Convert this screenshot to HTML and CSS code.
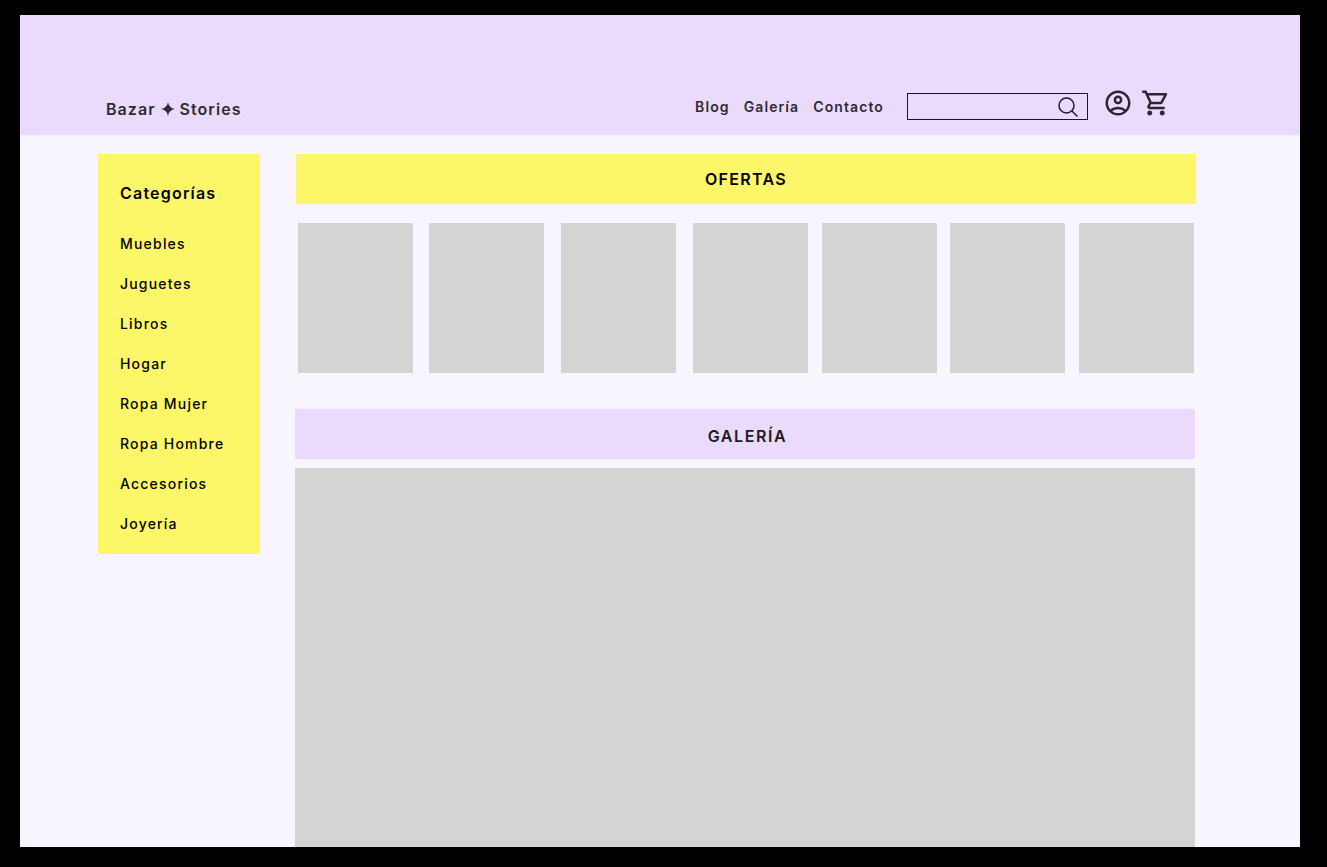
FILE: index.html
```html
<!DOCTYPE html>
<html lang="es">
<head>
<meta charset="utf-8">
<title>Bazar Stories</title>
<link rel="stylesheet" href="styles.css">
</head>
<body>
<div class="frame">
  <header class="header">
    <div class="logo">
      <span>Bazar</span>
      <svg class="star" viewBox="0 0 14 14" width="14" height="14" fill="#2f2b36"><path d="M7 0C7.6 4 10 6.4 14 7 10 7.6 7.6 10 7 14 6.400 10 4 7.600 0 7 4 6.400 6.400 4 7 0z"/></svg>
      <span>Stories</span>
    </div>
    <nav class="nav">
      <a>Blog</a>
      <a>Galería</a>
      <a>Contacto</a>
    </nav>
    <div class="search">
      <svg class="search-icon" viewBox="0 0 22 22" width="22" height="22" fill="none" stroke="#1f1a33" stroke-width="1.5"><circle cx="9.5" cy="9.5" r="7.5"/><path d="M15 15l5.5 5.5"/></svg>
    </div>
    <div class="icons">
      <svg viewBox="0 0 24 24" width="30" height="30" fill="#2b2730"><path d="M12 2C6.48 2 2 6.48 2 12s4.48 10 10 10 10-4.48 10-10S17.52 2 12 2zM7.35 18.5C8.66 17.56 10.26 17 12 17s3.34.56 4.65 1.5C15.34 19.44 13.74 20 12 20s-3.34-.56-4.65-1.5zm10.79-1.38C16.45 15.8 14.32 15 12 15s-4.45.8-6.14 2.12C4.7 15.73 4 13.95 4 12c0-4.42 3.58-8 8-8s8 3.58 8 8c0 1.95-.7 3.73-1.86 5.12z"/><path d="M12 6c-1.93 0-3.5 1.57-3.5 3.5S10.07 13 12 13s3.5-1.57 3.5-3.5S13.93 6 12 6zm0 5c-.83 0-1.5-.67-1.5-1.5S11.17 8 12 8s1.5.67 1.5 1.5S12.83 11 12 11z"/></svg>
      <svg viewBox="0 0 24 24" width="30" height="30" fill="#2b2730"><path d="M15.55 13c.75 0 1.41-.41 1.75-1.03l3.58-6.49c.37-.66-.11-1.48-.87-1.48H5.21l-.94-2H1v2h2l3.6 7.59-1.35 2.44C4.52 15.37 5.48 17 7 17h12v-2H7l1.1-2h7.45zM6.16 6h12.15l-2.76 5H8.53L6.16 6zM7 18c-1.1 0-1.99.9-1.99 2S5.9 22 7 22s2-.9 2-2-.9-2-2-2zm10 0c-1.1 0-1.99.9-1.99 2s.89 2 1.99 2 2-.9 2-2-.9-2-2-2z"/></svg>
    </div>
  </header>
  <main class="main">
    <aside class="sidebar">
      <h2 class="sidebar-title">Categorías</h2>
      <ul class="cat-list">
        <li>Muebles</li>
        <li>Juguetes</li>
        <li>Libros</li>
        <li>Hogar</li>
        <li>Ropa Mujer</li>
        <li>Ropa Hombre</li>
        <li>Accesorios</li>
        <li>Joyería</li>
      </ul>
    </aside>
    <div class="content">
      <section class="offers">
        <h2 class="band band-yellow">OFERTAS</h2>
        <div class="thumbs">
          <div class="thumb"></div>
          <div class="thumb gap-16"></div>
          <div class="thumb gap-17"></div>
          <div class="thumb gap-17"></div>
          <div class="thumb gap-14"></div>
          <div class="thumb gap-13"></div>
          <div class="thumb gap-14"></div>
        </div>
      </section>
      <section class="gallery">
        <h2 class="band band-lilac">GALERÍA</h2>
        <div class="gallery-box"></div>
      </section>
    </div>
  </main>
</div>
</body>
</html>
```

FILE: styles.css
```css
* { box-sizing: border-box; }
html, body { height: 100%; }
body {
  margin: 0;
  background: #000;
  padding: 15px 27px 20px 20px;
  font-family: Inter, "Open Sans", "Liberation Sans", sans-serif;
  overflow: hidden;
}
.frame {
  height: 832px;
  background: #f8f5ff;
  display: flex;
  flex-direction: column;
  overflow: hidden;
}
.header {
  height: 120px;
  flex: none;
  background: #eadbfd;
  display: flex;
  align-items: flex-start;
  padding: 78px 129px 0 86px;
}
.logo {
  display: flex;
  align-items: center;
  gap: 5px;
  font-size: 16px;
  line-height: 32px;
  font-weight: 600;
  letter-spacing: 1.05px;
  color: #2f2b36;
}
.star { display: block; }
.nav {
  margin-left: auto;
  display: flex;
  gap: 14px;
  font-size: 14px;
  line-height: 28px;
  font-weight: 600;
  letter-spacing: 1.1px;
  color: #2f2b36;
}
.search {
  width: 181px;
  height: 27px;
  margin: 0 15px 0 23px;
  border: 1px solid #1a1038;
  display: flex;
  align-items: center;
  justify-content: flex-end;
  padding-right: 8px;
}
.search-icon { display: block; }
.icons {
  display: flex;
  gap: 8px;
  margin-top: -5px;
}
.icons svg { display: block; }
.main {
  flex: 1;
  min-height: 0;
  display: flex;
  align-items: flex-start;
  padding: 19px 0 0 78px;
}
.sidebar {
  width: 162px;
  height: 400px;
  flex: none;
  background: #fbf769;
  padding: 27px 0 0 22px;
  color: #000;
}
.sidebar-title {
  margin: 0 0 29px;
  font-size: 16px;
  line-height: 24px;
  font-weight: 600;
  letter-spacing: 1.2px;
}
.cat-list {
  margin: 0;
  padding: 0;
  list-style: none;
  display: flex;
  flex-direction: column;
  gap: 20px;
  font-size: 14px;
  line-height: 20px;
  font-weight: 500;
  letter-spacing: 1.2px;
}
.content {
  width: 900px;
  margin-left: 35px;
  flex: none;
}
.offers { margin: 0 -1px 0 1px; }
.band {
  margin: 0;
  height: 50px;
  font-size: 16px;
  font-weight: 600;
  letter-spacing: 1.3px;
  text-align: center;
  line-height: 51px;
}
.band-yellow { background: #fbf769; color: #000; }
.band-lilac { background: #eadbfd; color: #1d1a22; line-height: 55px; padding-left: 5px; letter-spacing: 1.6px; }
.thumbs {
  display: flex;
  padding: 19px 0 0 2px;
}
.thumb {
  width: 115px;
  height: 150px;
  background: #d4d4d4;
  flex: none;
}
.gap-13 { margin-left: 13px; }
.gap-14 { margin-left: 14px; }
.gap-16 { margin-left: 16px; }
.gap-17 { margin-left: 17px; }
.gallery { margin-top: 36px; }
.gallery-box {
  margin-top: 9px;
  height: 500px;
  background: #d4d4d4;
}
```
